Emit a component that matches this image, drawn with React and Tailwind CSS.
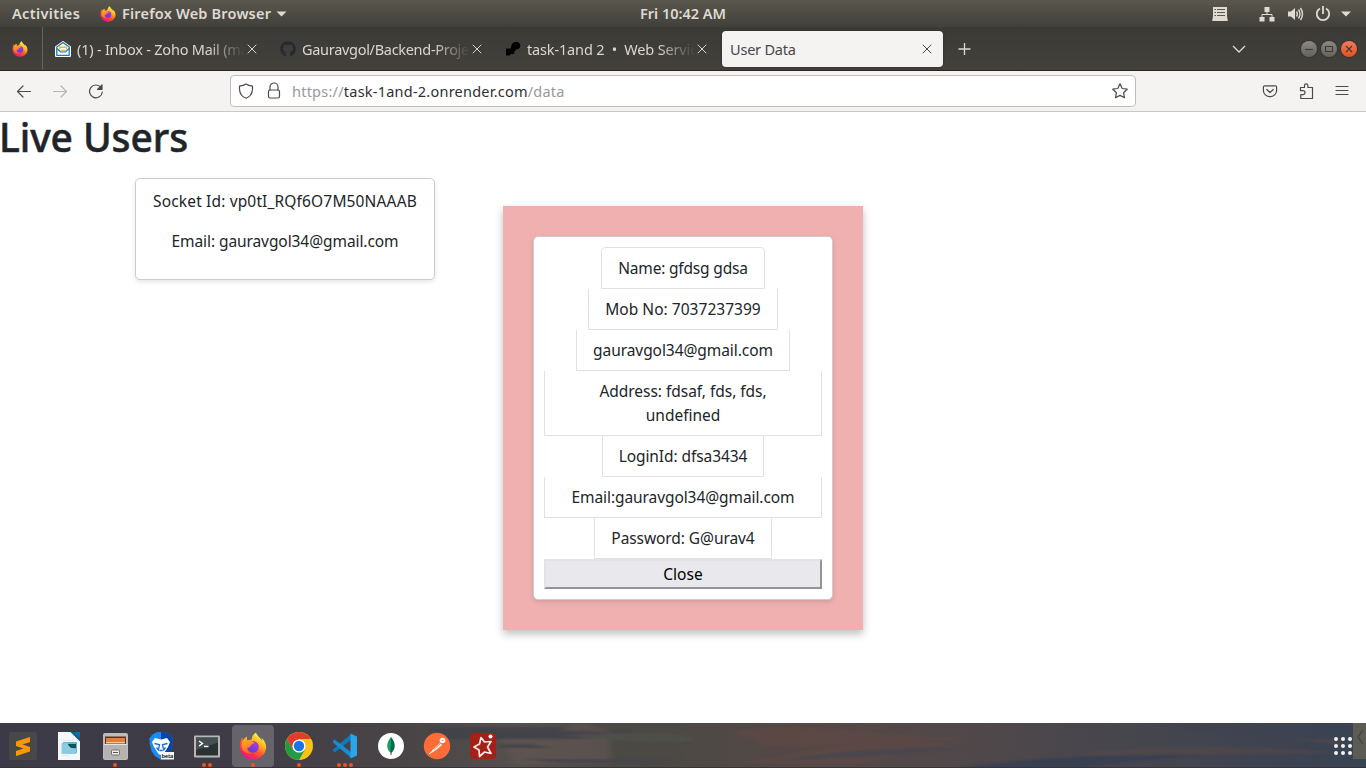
import React from "react";
import { FaGithub } from "react-icons/fa";

function Firefox({ size, id }) {
  return (
    <svg width={size} height={size} viewBox="0 0 32 32" className="shrink-0">
      <defs>
        <linearGradient id={id + "a"} x1="0.8" y1="0.05" x2="0.25" y2="0.95">
          <stop offset="0.05" stopColor="#fff44f" />
          <stop offset="0.35" stopColor="#ffb01c" />
          <stop offset="0.6" stopColor="#ff5a2c" />
          <stop offset="0.8" stopColor="#ff2f50" />
          <stop offset="1" stopColor="#e31587" />
        </linearGradient>
        <linearGradient id={id + "b"} x1="0.3" y1="1" x2="0.8" y2="0">
          <stop offset="0" stopColor="#5b3ddb" />
          <stop offset="1" stopColor="#b833e1" />
        </linearGradient>
        <linearGradient id={id + "c"} x1="0" y1="0" x2="0.3" y2="1">
          <stop offset="0" stopColor="#ffbd2e" />
          <stop offset="1" stopColor="#ff6a1f" />
        </linearGradient>
      </defs>
      <path
        fill={"url(#" + id + "a)"}
        d="M29.500 11.500C28.500 9.300 27 7.600 25.300 6.800c1 1.800 1.300 3 1.400 4C24.500 6 20.600 4.500 19.500.500 16 2.500 14.500 6 14.500 8.500c-2 .1-3.600.8-4.800 1.400C9 8.500 8.800 7 9.200 5.300 7 6.300 5.500 8 4.600 9.700 4 9 3.800 7.500 4 6 2 9 1 12.500 1 17c0 8 7 14.500 15 14.500S31 25 31 17.500c0-2.200-.6-4.300-1.500-6z"
      />
      <circle cx="16" cy="17" r="6.600" fill={"url(#" + id + "b)"} />
      <path
        fill={"url(#" + id + "c)"}
        d="M4.600 9.700C5.500 8 7 6.300 9.200 5.300 8.800 7 9 8.500 9.700 9.900c1.800-.9 3.500-.9 4.800-.9.200 1.500 2.500 2.700 3.300 3-.3 1.500-3.300 2-4.300 3-.6.7-.6 2.400-1.500 2.400-1.200 0-2 .2-2.400.6C8.500 21 11.500 24 15.500 24c-6 2-12.500-2-12.500-8 0-2.400.6-4.600 1.600-6.300z"
      />
    </svg>
  );
}

function Cross({ className }) {
  return (
    <svg width="16" height="16" viewBox="0 0 16 16" className={className} fill="none" stroke="currentColor" strokeWidth="1" strokeLinecap="round">
      <path d="M4 4l8 8M12 4l-8 8" />
    </svg>
  );
}

function Tab({ icon, children, tracking }) {
  return (
    <div className="flex h-9 w-[221px] items-center pl-2 text-[#dad6cd]">
      <span className="flex w-4 shrink-0">{icon}</span>
      <span className="ml-[6px] w-[168px] whitespace-pre [mask-image:linear-gradient(to_right,#000_78%,transparent_100%)]">
        <span className={"text-[14.500px] leading-6 " + tracking}>{children}</span>
      </span>
      <Cross className="-ml-[1px] shrink-0" />
    </div>
  );
}

function WindowButton({ close, children }) {
  return (
    <span
      className={
        "flex size-4 items-center justify-center rounded-full shadow-[0_0_1px_1px_#34332f] " +
        (close ? "bg-linear-to-b from-[#f37a56] to-[#e2501f]" : "bg-linear-to-b from-[#8b8982] to-[#64625c]")
      }
    >
      <svg width="16" height="16" viewBox="0 0 16 16" fill="none" stroke="#3c3b37" strokeWidth="1.100">
        {children}
      </svg>
    </span>
  );
}

function TopBar() {
  return (
    <header className="grid h-[27px] grid-cols-[1fr_auto_1fr] items-center bg-linear-to-b from-[#5a574d] to-[#41403b] text-[14.500px] font-semibold leading-none text-[#dfdbd2]">
      <div className="flex items-center pl-3">
        <span className="w-[88px] whitespace-nowrap tracking-[0.35px]">Activities</span>
        <Firefox size={16} id="ft" />
        <span className="ml-[6px] w-[151px] whitespace-nowrap tracking-[0.2px]">Firefox Web Browser</span>
        <svg width="11" height="6" viewBox="0 0 11 6" className="ml-[3px]" fill="#dfdbd2"><path d="M.5.500h10L5.500 5.500z" /></svg>
      </div>
      <span className="-mt-px whitespace-nowrap">Fri 10:42 AM</span>
      <div className="flex items-center justify-end pr-[15px]">
        <svg width="16" height="16" viewBox="0 0 16 16" className="mr-[31px]">
          <path fill="#dfdbd2" d="M1 1h14v9l.8 5H.2L1 10z" />
          <path stroke="#5a574f" strokeWidth="1.200" d="M2.500 3.500h1.500M5 3.500h8M2.500 6.500h1.500M5 6.500h8M2.500 9.500h1.500M5 9.500h8" />
        </svg>
        <svg width="16" height="16" viewBox="0 0 16 16" className="mr-3">
          <path fill="#dfdbd2" d="M5.500 1h5v5h-5zM.500 11h5v4.500h-5zM10.500 11h5v4.500h-5z" />
          <path fill="none" stroke="#dfdbd2" d="M8 5v3.500M3 11V8.500h10V11" />
        </svg>
        <svg width="17" height="16" viewBox="0 0 17 16" className="mr-[11px]">
          <path fill="#dfdbd2" d="M1 5.500h3L8 2v12l-4-3.500H1z" />
          <path fill="none" stroke="#dfdbd2" strokeWidth="1.400" d="M9.500 5.500q1.600 2.500 0 5M11.500 3.500q3 4.500 0 9M13.500 2q4 6 0 12" />
        </svg>
        <svg width="16" height="16" viewBox="0 0 16 16" className="mr-[10px]" fill="none" stroke="#dfdbd2" strokeWidth="1.800">
          <path d="M8 0v8M5 2.500a6.200 6.200 0 1 0 6 0" />
        </svg>
        <svg width="10" height="6" viewBox="0 0 10 6" fill="#dfdbd2"><path d="M0 .5h10L5 5.500z" /></svg>
      </div>
    </header>
  );
}

function TabBar() {
  return (
    <div className="flex h-11 items-center border-b border-[#2c2420] bg-linear-to-b from-[#3b3a36] to-[#43413c]">
      <div className="mr-1 flex h-full w-[43px] items-center border-r border-[#66645e] pl-3">
        <Firefox size={16} id="fp" />
      </div>
      <div className="flex gap-1">
        <Tab
          tracking="tracking-[-0.22px]"
          icon={
            <svg width="16" height="16" viewBox="0 0 16 16">
              <path fill="#fff" stroke="#fff" strokeWidth="2" strokeLinejoin="round" d="M8 1l7 5v9H1V6z" />
              <path fill="#fff" stroke="#1976c5" strokeWidth="1.300" strokeLinejoin="round" d="M8 1.500L14.200 6v8.300H1.800V6z" />
              <path fill="none" stroke="#f2b531" strokeWidth="1.400" d="M4.500 8.500V6.200h7v2.300M5.500 9.500h5" />
              <path fill="none" stroke="#1976c5" strokeWidth="1.100" d="M2 7.500l3.500 3.500h5L14 7.500" />
            </svg>
          }
        >
          (1) - Inbox - Zoho Mail (ma
        </Tab>
        <Tab tracking="tracking-[-0.3px]" icon={<FaGithub size={16} color="#242a30" />}>Gauravgol/Backend-Proje</Tab>
        <Tab
          tracking="tracking-[-0.15px]"
          icon={
            <svg width="16" height="16" viewBox="0 0 16 16">
              <path d="M1 7.500h5v5.500L4.500 14.500H1zM6 7.500C6 4 7 2 10 1h2.500A3.800 3.800 0 0 1 14 7.500q-4 .5-5 4.500v1H5z" />
            </svg>
          }
        >
          {"task-1and 2  •  Web Servic"}
        </Tab>
        <div className="flex h-9 w-[221px] items-center justify-between rounded bg-[#f4f3f1] pl-2 pr-2 text-[#47474b] shadow-[0_0_2px_#222]">
          <span className="pt-[2px] text-[14.500px] tracking-[-0.2px]">User Data</span>
          <Cross />
        </div>
      </div>
      <svg width="14" height="14" viewBox="0 0 14 14" className="ml-[14px]" fill="none" stroke="#dfdbd2" strokeWidth="1.300"><path d="M7.500 1v12M1.500 7h12" /></svg>
      <svg width="14" height="8" viewBox="0 0 14 8" className="ml-auto mr-[55px]" fill="none" stroke="#dfdbd2" strokeWidth="1.300"><path d="M1 1l6 6 6-6" /></svg>
      <div className="mr-[9px] flex gap-1">
        <WindowButton><path d="M4 8.500h8" /></WindowButton>
        <WindowButton><path d="M4.500 5.500h7v5h-7z" /></WindowButton>
        <WindowButton close><path d="M5 5l6 6M11 5l-6 6" /></WindowButton>
      </div>
    </div>
  );
}

function Toolbar() {
  const line = { fill: "none", stroke: "#4b4a4c", strokeWidth: 1.200, strokeLinecap: "round", strokeLinejoin: "round" };
  return (
    <div className="flex h-[41px] items-center border-b border-[#c9c8c6] bg-[#f4f3f1]">
      <svg width="16" height="16" viewBox="0 0 16 16" className="ml-4" {...line}><path d="M14.500 8.500h-13M7 3L1.500 8.500 7 14" /></svg>
      <svg width="16" height="16" viewBox="0 0 16 16" className="ml-5" {...line} stroke="#b5b4b3"><path d="M1.500 8.500h13M9 3l5.500 5.500L9 14" /></svg>
      <svg width="16" height="16" viewBox="0 0 16 16" className="ml-5" {...line}>
        <path d="M13 4.500A6.400 6.400 0 1 0 14.300 9" /><path fill="#4b4a4c" d="M14 2v4.500H9.500z" />
      </svg>
      <div className="ml-[126px] flex h-8 w-[906px] items-center rounded border border-[#c0bfbd] bg-white pl-[7px] pr-[7px]">
        <svg width="16" height="16" viewBox="0 0 16 16" {...line}><path d="M8 1Q10.500 2.700 14.500 3.200v3C14.200 10.500 11.500 14 8 15.200 4.500 14 1.800 10.500 1.500 6.200v-3Q5.500 2.700 8 1z" /></svg>
        <svg width="16" height="18" viewBox="0 0 16 18" className="ml-3" {...line}><path d="M4 8V5a4 4 0 0 1 8 0v3" /><rect x="2.500" y="8" width="11" height="8" rx="1.500" /></svg>
        <span className="ml-[10px] whitespace-nowrap pt-[2px] text-[14.500px] tracking-[0.230px] text-[#98989a]">
          https://<span className="text-[#303032]">task-1and-2.onrender.com</span>/data
        </span>
        <svg width="16" height="16" viewBox="0 0 16 16" className="ml-auto" {...line}><path d="M8 .8l2.200 4.700 5 .7-3.600 3.500.9 5.100L8 12.400l-4.500 2.400.9-5.100L.8 6.200l5-.7z" /></svg>
      </div>
      <svg width="16" height="16" viewBox="0 0 16 16" className="ml-auto" {...line}><path d="M2.700 2.800h10.600a1.300 1.300 0 0 1 1.300 1.300v3.500a6.600 6.100 0 0 1-13.200 0V4.100a1.300 1.300 0 0 1 1.300-1.300zM4.800 6.500L8 9.500l3.200-3" /></svg>
      <svg width="16" height="18" viewBox="0 0 16 18" className="ml-[20px]" {...line}><path d="M2.500 5.500h4V3.500a1.700 1.700 0 0 1 3.400 0v2h4.600v11H2.800v-3.800H5a2 2 0 0 0 0-4H2.500z" /></svg>
      <svg width="16" height="16" viewBox="0 0 16 16" className="ml-5 mr-4" {...line}><path d="M2 3.500h12M2 7.500h12M2 11.500h12" /></svg>
    </div>
  );
}

const details = [
  { text: "Name: gfdsg gdsa", box: "w-[164px] border-t rounded-t tracking-[-0.180px]" },
  { text: "Mob No: 7037237399", box: "w-[190px] tracking-[0.030px]" },
  { text: "gauravgol34@gmail.com", box: "w-[214px] tracking-[-0.070px]" },
  { text: "Address: fdsaf, fds, fds, undefined", box: "w-[278px] px-10 tracking-[-0.030px]" },
  { text: "LoginId: dfsa3434", box: "w-[162px] tracking-[-0.080px]" },
  { text: "Email:gauravgol34@gmail.com", box: "w-[278px] tracking-[-0.080px]" },
  { text: "Password: G@urav4", box: "w-[178px] tracking-[-0.080px]" },
];

function DetailsModal() {
  return (
    <section className="absolute left-[503px] top-[94px] h-[424px] w-[360px] bg-[#f0b0b0] p-[30px] shadow-[0_4px_8px_rgba(0,0,0,0.25)]">
      <div className="flex h-[364px] flex-col items-center rounded-[5px] border border-[#ccc] bg-white p-[10px] text-center shadow-[0_2px_5px_rgba(0,0,0,0.12)]">
        {details.map((d) => (
          <div key={d.text} className={"shrink-0 border-x border-b border-[#dee2e6] py-2 " + d.box}>{d.text}</div>
        ))}
        <button className="h-[30px] w-[278px] border-2 border-b-[#949494] border-l-[#e3e3e3] border-r-[#949494] border-t-[#e3e3e3] bg-[#e9e9ed] tracking-[0px] text-black">
          Close
        </button>
      </div>
    </section>
  );
}

function DockItem({ dots = 0, active, children }) {
  return (
    <div className="flex w-[46px] justify-center">
      <div className={"flex h-[42px] w-[42px] flex-col items-center rounded pt-[7px] " + (active ? "bg-[#66636a]" : "")}>
        {children}
        <div className="mt-[3px] flex gap-[2px]">
          {Array.from({ length: dots }, (_, i) => (
            <span key={i} className="size-1 rounded-full bg-[#e95420]" />
          ))}
        </div>
      </div>
    </div>
  );
}

function Glyph({ children }) {
  return <svg width="28" height="28" viewBox="0 0 28 28" className="shrink-0">{children}</svg>;
}

function Wallpaper() {
  return (
    <svg width="1366" height="45" viewBox="0 0 1366 45" preserveAspectRatio="none" className="absolute inset-0">
      <defs>
        <linearGradient id="wall">
          <stop offset="0" stopColor="#3b3a46" />
          <stop offset="0.17" stopColor="#3f3c47" />
          <stop offset="0.3" stopColor="#494546" />
          <stop offset="0.38" stopColor="#56504f" />
          <stop offset="0.45" stopColor="#4a4944" />
          <stop offset="0.51" stopColor="#4d4945" />
          <stop offset="0.6" stopColor="#564846" />
          <stop offset="0.7" stopColor="#50484a" />
          <stop offset="0.83" stopColor="#46464d" />
          <stop offset="0.94" stopColor="#3d4352" />
          <stop offset="1" stopColor="#384353" />
        </linearGradient>
        <filter id="soft"><feGaussianBlur stdDeviation="3 1" /></filter>
      </defs>
      <path fill="url(#wall)" d="M0 0h1366v45H0z" />
      <g filter="url(#soft)">
        <path fill="#434249" d="M430 4h150l60 6-60 6H430z" />
        <path fill="#605653" d="M558 8l22-8 34 9zM500 16h110v25h-95z" opacity=".7" />
        <path fill="#464548" d="M500 21h30l25 4h-55zM520 36h160l-30 4H560z" />
        <path fill="#504f49" d="M560 12q130-6 135 6-50 3-135-6z" />
        <path fill="#5f4a43" d="M730 8q60-8 140 2l110 6-210 8zM740 40l130-22 80 2-90 20z" opacity=".6" />
        <path fill="#49464d" d="M780 38q80-16 190-12-60 6-190 12z" />
        <path fill="#394151" d="M960 45q110-16 250-13-80 6-130 13z" />
        <path fill="#3f4350" d="M1150 0h90q70 20 70 32-60-20-160-32z" />
        <path fill="#554749" d="M1080 30q120-12 260 0l-240 3zM1290 16h50v6z" opacity=".6" />
      </g>
      <path fill="#38333b" d="M0 44h1366v1H0z" />
    </svg>
  );
}

function Dock() {
  return (
    <footer className="relative h-[45px] overflow-hidden">
      <Wallpaper />
      <div className="relative flex h-full items-start pt-[2px]">
        <DockItem>
          <Glyph>
            <rect width="28" height="28" rx="2" fill="#484848" />
            <path fill="#ff9800" d="M7 9.500L21 5v5l-7.500 2.500L21 15v4.500L7 24v-5l7.500-2.500L7 14z" />
          </Glyph>
        </DockItem>
        <DockItem>
          <Glyph>
            <path fill="#f5f8f9" d="M3 0h15.500L25 6.500V28H3z" />
            <path fill="#0d6fa5" d="M17.500 0H25v7.500z" /><path fill="#075d8e" d="M15.500 0h3L25 6.500v3z" />
            <path stroke="#dceaf0" strokeWidth="1" d="M7 8.500h9M7 23.500h7" />
            <path fill="#64b6d8" d="M8 10h14v11H8z" /><path fill="#174f54" d="M13 12h8v4h-8z" /><path fill="#8ccae6" d="M6.500 11h6q1 5 8.500 6.500V22H6.500z" />
          </Glyph>
        </DockItem>
        <DockItem dots={1}>
          <Glyph>
            <rect x="2" y="1" width="25" height="27" rx="2" fill="#bdbcb9" />
            <path fill="#5c3524" d="M4 4.500h21v8H4z" /><path fill="#e87c35" d="M5 6h19v4H5z" /><path fill="#f6c79a" d="M5 10h19v1.500H5z" />
            <path fill="#b4b3b0" d="M3 12h23v15H3z" /><path stroke="#e4e3e0" d="M3 12.500h23" /><rect x="10.500" y="18" width="8" height="5" rx="1" fill="#eee" stroke="#73726f" /><path stroke="#555" d="M12 20.500h5" />
          </Glyph>
        </DockItem>
        <DockItem>
          <Glyph>
            <path fill="#1b8cf2" d="M8 1l3-1h7l3 2 3 1 2 5-1 3 .5 2-2 7-4 5-5.500 3L8 24l-3.500-5L2.500 11 3 9 2 7l3-4z" />
            <path fill="#0645a9" d="M14 0h4l3 2 3 1 2 5-1 3 .5 2-2 7-4 5-5.500 3z" />
            <path fill="#fff" d="M8 6l6 1.500L20 6l3 4-2 5-2 3-2.500 4-2.500 1-2.500-1L9 18l-2-3-2-5z" />
            <path stroke="#0b6ad8" strokeWidth="1.300" fill="none" d="M7.500 11.500l5 1.200-.8 4M20.500 11.500l-5 1.200.8 4M9.500 15.500l2.500 3M18.500 15.500l-2.500 3M12.500 18.500h3" />
            <rect x="14" y="20" width="13" height="7.500" fill="#f7f7f7" />
            <text x="14.500" y="26" fontSize="5.800" fontWeight="600" textLength="12" fontFamily="Noto Sans, sans-serif" fill="#111">beta</text>
          </Glyph>
        </DockItem>
        <DockItem dots={2}>
          <Glyph>
            <rect x="1" y="3.500" width="26" height="22" rx="1" fill="#b8b7b4" /><rect x="3" y="5.500" width="22" height="18" fill="#2b3234" />
            <path fill="#465052" d="M3 5.500h22v5L3 18z" /><path fill="none" stroke="#fff" strokeWidth="1.400" d="M6 9l3.500 2.500L6 14M11 14.500h4.500" />
          </Glyph>
        </DockItem>
        <DockItem dots={1} active><Firefox size={28} id="fd" /></DockItem>
        <DockItem dots={1}>
          <Glyph>
            <circle cx="14" cy="14" r="14" fill="#fbc116" />
            <path fill="#e33b2e" d="M1.880 7A14 14 0 0 1 26.120 7H14L8 17.500z" />
            <path fill="#229a48" d="M1.880 7A14 14 0 0 0 14 28l6-10.500H8z" />
            <circle cx="14" cy="14" r="6.600" fill="#fff" /><circle cx="14" cy="14" r="5.200" fill="#1a73e8" />
          </Glyph>
        </DockItem>
        <DockItem dots={3}>
          <Glyph>
            <path fill="#0f79be" d="M20 2L1.500 18l2 2.500L20 8z" />
            <path fill="#168ed1" d="M20 26L1.500 10l2-2.500L20 20z" />
            <path fill="#2ba5e9" d="M19.500 1.500l6.500 3v19l-6.500 3z" />
          </Glyph>
        </DockItem>
        <DockItem>
          <Glyph><circle cx="14" cy="14" r="13" fill="#fff" /><path fill="#10a060" d="M14 5c-5 6-5 12 0 16z" /><path fill="#07684a" d="M14 5c5 6 5 12 0 16z" /><path stroke="#07684a" d="M14 15v8" /></Glyph>
        </DockItem>
        <DockItem>
          <Glyph>
            <circle cx="14" cy="14" r="13.200" fill="#ff6c37" /><circle cx="19.500" cy="8.500" r="2.800" fill="#fff" />
            <path fill="#fff" d="M17 11l2 2-6 5-5.500 3.500L9.500 18z" /><path stroke="#fff" strokeWidth="1" d="M6 22l5-4" /><path stroke="#ff6c37" strokeWidth=".8" d="M11 17.500l7-6.500M18.500 8.500l2.500-.5" />
          </Glyph>
        </DockItem>
        <DockItem>
          <Glyph>
            <rect x="1" y="1" width="26" height="26" rx="4" fill="#a52016" />
            <path fill="none" stroke="#f7e9e4" strokeWidth="1.700" strokeLinejoin="round" d="M12 5.500l3.500 4.500 6.500-.5-3.500 5.500 3.500 6.500-6.500-1.500-5 4.500-.5-6.500-5-3 5.500-3z" />
            <circle cx="21.500" cy="4.500" r="2" fill="#fff" />
          </Glyph>
        </DockItem>
        <div className="ml-auto mr-[1px] mt-3 grid grid-cols-3 gap-[3px]">
          {Array.from({ length: 9 }, (_, i) => (
            <span key={i} className="size-1 rounded-full bg-[#f2f2f2]" />
          ))}
        </div>
        <div className="-mt-[2px] flex h-9 w-[13px] items-center justify-center bg-[#5c5c55]">
          <svg width="8" height="16" viewBox="0 0 8 16" className="-mt-2" fill="none" stroke="#474842" strokeWidth="1.500"><path d="M7 1L2 8l5 7" /></svg>
        </div>
      </div>
    </footer>
  );
}

export default function App() {
  return (
    <div className="flex h-[768px] w-[1366px] flex-col overflow-hidden bg-white font-['Noto_Sans','Open_Sans',sans-serif]">
      <TopBar />
      <TabBar />
      <Toolbar />
      <main className="relative h-[611px] text-[15.500px] leading-6 text-[#212529]">
        <h1 className="-ml-px h-12 text-[39px] font-medium leading-[50px] tracking-[-0.1px] [-webkit-text-stroke:0.5px_#212529]">Live Users</h1>
        <section className="ml-[135px] mt-[18px] h-[102px] w-[300px] rounded-[5px] border border-[#ccc] bg-white pt-[10px] text-center shadow-[0_2px_5px_rgba(0,0,0,0.1)]">
          <p className="mb-4 tracking-[0.150px]">Socket Id: vp0tI_RQf6O7M50NAAAB</p>
          <p className="tracking-[-0.080px]">Email: gauravgol34@gmail.com</p>
        </section>
        <DetailsModal />
      </main>
      <Dock />
    </div>
  );
}
